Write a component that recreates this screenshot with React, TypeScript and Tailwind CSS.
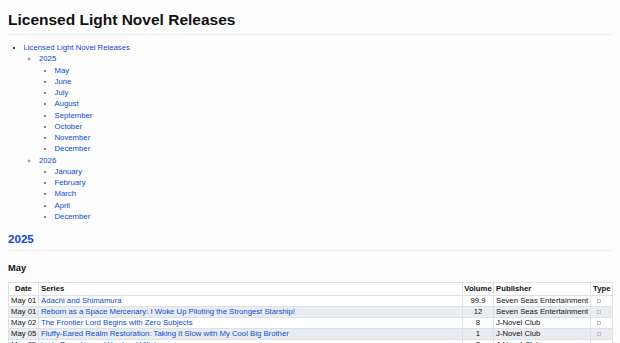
const months2025 = ["May", "June", "July", "August", "September", "October", "November", "December"]
const months2026 = ["January", "February", "March", "April", "December"]

type Release = { date: string, series: string, volume: string, publisher: string }

const releases: Release[] = [
  { date: "May 01", series: "Adachi and Shimamura", volume: "99.9", publisher: "Seven Seas Entertainment" },
  { date: "May 01", series: "Reborn as a Space Mercenary: I Woke Up Piloting the Strongest Starship!", volume: "12", publisher: "Seven Seas Entertainment" },
  { date: "May 02", series: "The Frontier Lord Begins with Zero Subjects", volume: "8", publisher: "J-Novel Club" },
  { date: "May 05", series: "Fluffy-Eared Realm Restoration: Taking It Slow with My Cool Big Brother", volume: "1", publisher: "J-Novel Club" },
  { date: "May 05", series: "Lady Pumpkin and Her Lord Villain", volume: "3", publisher: "J-Novel Club" },
]

const A = ({ children }: { children: React.ReactNode }) => (
  <a href="#" className="text-[#0d4ad0] no-underline">{children}</a>
)

const Toc = () => {
  return (
    <ul className="list-disc pl-[15.5px] mt-[7px] leading-[11.25px]">
      <li>
        <A>Licensed Light Novel Releases</A>
        <ul className="list-[circle] pl-[15.5px] marker:text-[#888]">
          <li>
            <A>2025</A>
            <ul className="list-[square] pl-[15.5px] marker:text-[#111]">
              {months2025.map(m => <li key={m}><A>{m}</A></li>)}
            </ul>
          </li>
          <li>
            <A>2026</A>
            <ul className="list-[square] pl-[15.5px] marker:text-[#111]">
              {months2026.map(m => <li key={m}><A>{m}</A></li>)}
            </ul>
          </li>
        </ul>
      </li>
    </ul>
  )
}

const TypeGlyph = () => (
  <span className="inline-block w-[4px] h-[4.5px] border-[0.5px] border-[#c4c4c4] ml-[4px] align-middle" />
)

const ReleaseTable = () => {
  return (
    <table className="table-fixed border-collapse w-[604px] mt-[8px] text-[7.75px] leading-[9px]">
      <colgroup>
        <col className="w-[30px]" />
        <col className="w-[424px]" />
        <col className="w-[31px]" />
        <col className="w-[97px]" />
        <col className="w-[22px]" />
      </colgroup>
      <thead>
        <tr className="h-[12.5px] bg-white">
          <th className="border border-[#dde1e5] px-[2px] text-center font-bold">Date</th>
          <th className="border border-[#dde1e5] px-[2px] text-left font-bold">Series</th>
          <th className="border border-[#dde1e5] px-[1px] text-center font-bold">Volume</th>
          <th className="border border-[#dde1e5] px-[2px] text-left font-bold">Publisher</th>
          <th className="border border-[#dde1e5] px-[2px] text-left font-bold">Type</th>
        </tr>
      </thead>
      <tbody>
        {releases.map((r, i) => (
          <tr key={i} className={`h-[11px] ${i % 2 === 1 ? "bg-[#e9edf1]" : "bg-white"}`}>
            <td className="border border-[#dde1e5] px-[2px] whitespace-nowrap">{r.date}</td>
            <td className="border border-[#dde1e5] px-[2px] whitespace-nowrap overflow-hidden"><A>{r.series}</A></td>
            <td className="border border-[#dde1e5] px-[1px] text-center">{r.volume}</td>
            <td className="border border-[#dde1e5] px-[2px] whitespace-nowrap overflow-hidden">{r.publisher}</td>
            <td className="border border-[#dde1e5] px-[2px]"><TypeGlyph /></td>
          </tr>
        ))}
      </tbody>
    </table>
  )
}

const App = () => {
  return (
    <div className="min-h-screen bg-[#fdfdfd] px-[8px] text-[#111] text-[7.75px] font-['Liberation_Sans',Arial,sans-serif]">
      <h1 className="pt-[11px] pb-[4.5px] text-[15.5px] leading-[18.5px] font-bold border-b border-[#eeeeee]">
        Licensed Light Novel Releases
      </h1>
      <Toc />
      <h2 className="mt-[10px] pb-[4px] text-[11.6px] leading-[14px] font-bold text-[#0d4ad0] border-b border-[#eeeeee]">
        2025
      </h2>
      <h3 className="mt-[12px] text-[9.3px] leading-[11px] font-bold">May</h3>
      <ReleaseTable />
    </div>
  )
}

export default App
